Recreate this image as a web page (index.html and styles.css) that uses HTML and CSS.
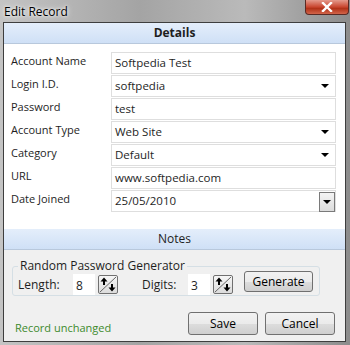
FILE: index.html
```html
<!DOCTYPE html>
<html lang="en">
<head>
    <meta charset="UTF-8">
    <title>Edit Record</title>
    <link rel="stylesheet" href="styles.css">
</head>
<body>
    <div class="window">
        <!-- Title bar -->
        <div class="titlebar">
            <span class="title">Edit Record</span>
            <button class="close" type="button">
                <svg width="14" height="10" viewBox="0 0 14 10">
                    <path d="M3 1 L11 9 M11 1 L3 9" stroke="#fff" stroke-width="2.4" stroke-linecap="square"/>
                </svg>
            </button>
        </div>

        <div class="client">
            <div class="section-head bold">Details</div>

            <!-- Record fields -->
            <div class="details">
                <div class="row">
                    <label>Account Name</label>
                    <div class="field">Softpedia Test</div>
                </div>
                <div class="row">
                    <label>Login I.D.</label>
                    <div class="field combo">softpedia<span class="arrow"></span></div>
                </div>
                <div class="row">
                    <label>Password</label>
                    <div class="field">test</div>
                </div>
                <div class="row">
                    <label>Account Type</label>
                    <div class="field combo">Web Site<span class="arrow"></span></div>
                </div>
                <div class="row">
                    <label>Category</label>
                    <div class="field combo">Default<span class="arrow"></span></div>
                </div>
                <div class="row">
                    <label>URL</label>
                    <div class="field">www.softpedia.com</div>
                </div>
                <div class="row">
                    <label>Date Joined</label>
                    <div class="field date">25/05/2010<span class="drop"><span class="arrow"></span></span></div>
                </div>
            </div>

            <div class="section-head">Notes</div>

            <div class="notes">
                <div class="generator">
                    <span class="legend">Random Password Generator</span>
                    <span class="lbl">Length:</span>
                    <div class="spin">
                        <span class="num">8</span>
                        <span class="spin-btn">
                            <svg width="18" height="17" viewBox="0 0 18 17">
                                <path d="M1 16 L17 1" stroke="#666" stroke-width="1"/>
                                <path d="M5 1.5 L1.5 5.5 H4 V9 H6 V5.5 H8.5 Z" fill="#000"/>
                                <path d="M13 15.5 L16.5 11.5 H14 V8 H12 V11.5 H9.5 Z" fill="#000"/>
                            </svg>
                        </span>
                    </div>
                    <span class="lbl digits">Digits:</span>
                    <div class="spin">
                        <span class="num">3</span>
                        <span class="spin-btn">
                            <svg width="18" height="17" viewBox="0 0 18 17">
                                <path d="M1 16 L17 1" stroke="#666" stroke-width="1"/>
                                <path d="M5 1.5 L1.5 5.5 H4 V9 H6 V5.5 H8.5 Z" fill="#000"/>
                                <path d="M13 15.5 L16.5 11.5 H14 V8 H12 V11.5 H9.5 Z" fill="#000"/>
                            </svg>
                        </span>
                    </div>
                    <button class="btn generate" type="button">Generate</button>
                </div>

                <div class="footer">
                    <span class="status">Record unchanged</span>
                    <div class="actions">
                        <button class="btn" type="button">Save</button>
                        <button class="btn" type="button">Cancel</button>
                    </div>
                </div>
            </div>
        </div>
    </div>
</body>
</html>
```
FILE: styles.css
```css
body {
    margin: 0;
    font-family: 'Open Sans', 'Noto Sans', sans-serif;
    font-size: 11px;
    color: #1e1e1e;
}

.window {
    width: 350px;
    height: 345px;
    box-sizing: border-box;
    padding: 0 4px 2px 3px;
    background: linear-gradient(to right, #c4c4c4, #a4a4a4 40%, #bababa 70%, #8c8c8c);
}

/* Title bar */
.titlebar {
    height: 22px;
    display: flex;
    justify-content: space-between;
    align-items: flex-start;
}

.title {
    margin: 3px 0 0 1px;
    font-size: 12px;
    color: #000;
    text-shadow: 0 0 6px #fff, 0 0 3px #fff;
}

.close {
    width: 44px;
    height: 15px;
    margin: 0 -3px 0 0;
    padding: 0;
    border: 1px solid #5a2a24;
    border-top: none;
    border-radius: 0 0 4px 4px;
    background: linear-gradient(#e49a8c, #c9462f 50%, #b13218 60%, #d2654a);
    display: flex;
    align-items: center;
    justify-content: center;
}

/* Client area */
.client {
    border: 1px solid #3e3e3e;
    background: #f0f0f0;
    height: 320px;
    box-sizing: border-box;
}

.section-head {
    height: 20px;
    line-height: 20px;
    text-align: center;
    font-size: 12px;
    background: linear-gradient(#e4eefb, #cfe0f6);
    border-bottom: 1px solid #b8c8dc;
}

.section-head.bold {
    font-weight: bold;
}

.details {
    background: #fff;
    height: 185px;
    box-sizing: border-box;
    padding: 7px 9px 0 7px;
}

.row {
    display: flex;
    align-items: center;
    height: 23px;
}

.row label {
    width: 100px;
    margin-top: -4px;
}

.field {
    flex: 1;
    height: 22px;
    box-sizing: border-box;
    border: 1px solid #dedede;
    padding: 0 3px;
    line-height: 20px;
    position: relative;
    font-size: 11.5px;
}

.arrow {
    position: absolute;
    right: 6px;
    top: 8px;
    width: 0;
    height: 0;
    border-left: 4px solid transparent;
    border-right: 4px solid transparent;
    border-top: 4px solid #000;
}

.drop {
    position: absolute;
    right: 0;
    top: 1px;
    width: 16px;
    height: 20px;
    box-sizing: border-box;
    border: 1px solid #7a7a7a;
    background: linear-gradient(#f4f4f4, #dcdcdc);
}

.drop .arrow {
    right: 3px;
    top: 7px;
}

/* Notes */
.notes {
    padding: 16px 0 0 8px;
}

.generator {
    position: relative;
    width: 308px;
    height: 30px;
    box-sizing: border-box;
    padding: 7px 0 0 5px;
    border: 1px solid #d5dfe5;
    border-radius: 3px;
    display: flex;
    align-items: flex-start;
}

.legend {
    position: absolute;
    left: 5px;
    top: -9px;
    padding: 0 2px;
    background: #f0f0f0;
    font-size: 12px;
    line-height: 16px;
}

.lbl {
    width: 55px;
    margin-top: 2px;
    font-size: 12px;
}

.lbl.digits {
    width: 46px;
    margin-left: 24px;
}

.spin {
    display: flex;
    align-items: flex-start;
}

.num {
    width: 22px;
    height: 21px;
    background: #fff;
    line-height: 24px;
    padding-left: 3px;
    box-sizing: border-box;
    font-size: 12px;
}

.spin-btn {
    width: 20px;
    height: 19px;
    margin: 1px 0 0 3px;
    box-sizing: border-box;
    border: 1px solid #707070;
    border-radius: 2px;
    background: linear-gradient(#f6f6f6, #dcdcdc);
    display: flex;
}

.btn {
    font-family: inherit;
    font-size: 12px;
    color: #000;
    border: 1px solid #707070;
    border-radius: 3px;
    background: linear-gradient(#f2f2f2, #ebebeb 50%, #dddddd 51%, #cfcfcf);
    padding: 0;
    height: 23px;
    width: 70px;
}

.btn.generate {
    margin: -3px 0 0 11px;
    width: 69px;
    height: 21px;
}

.footer {
    display: flex;
    justify-content: space-between;
    align-items: center;
    margin: 16px 10px 0 0;
    padding-left: 3px;
}

.status {
    color: #3c8a2c;
    margin-top: 8px;
}

.actions {
    display: flex;
    gap: 7px;
}
```
